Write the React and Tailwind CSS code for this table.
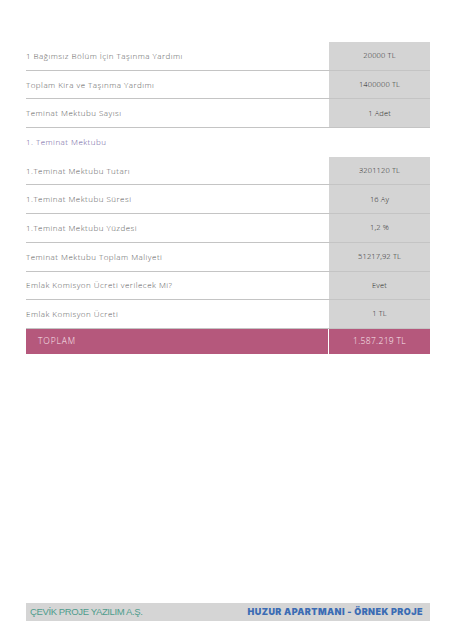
const rowsTop = [
  ['1 Bağımsız Bölüm İçin Taşınma Yardımı', '20000 TL'],
  ['Toplam Kira ve Taşınma Yardımı', '1400000 TL'],
  ['Teminat Mektubu Sayısı', '1 Adet'],
];

const rowsBottom = [
  ['1.Teminat Mektubu Tutarı', '3201120 TL'],
  ['1.Teminat Mektubu Süresi', '16 Ay'],
  ['1.Teminat Mektubu Yüzdesi', '1,2 %'],
  ['Teminat Mektubu Toplam Maliyeti', '51217,92 TL'],
  ['Emlak Komisyon Ücreti verilecek Mi?', 'Evet'],
  ['Emlak Komisyon Ücreti', '1 TL'],
];

const Row = ({ label, value }) => (
  <div className="flex h-[28.7px] border-b border-[#c4c4c4]">
    <div className="flex-1 flex items-center text-[8px] tracking-[0.06em] text-[#5a5a5a] font-light">{label}</div>
    <div className="w-[101px] bg-[#d4d4d4] flex items-center justify-center text-[7.5px] tracking-[0.02em] font-light text-[#1e1e1e]">{value}</div>
  </div>
);

export default function App() {
  return (
    <div className="w-[450px] h-[636px] bg-white relative" style={{ fontFamily: '"Open Sans", "DejaVu Sans", sans-serif' }}>
      <div className="pt-[42px] pl-[26px] w-[430px]">
        {rowsTop.map(([l, v]) => <Row key={l} label={l} value={v} />)}
        <div className="h-[28.7px] flex items-center text-[8px] tracking-[0.06em] font-light text-[#6b5a9c]">1. Teminat Mektubu</div>
        {rowsBottom.map(([l, v]) => <Row key={l} label={l} value={v} />)}
        <div className="flex h-[25px]">
          <div className="flex-1 bg-[#b5587c] flex items-center pl-[12px] text-[8.5px] tracking-[0.1em] font-light text-[#fbe9f0]">TOPLAM</div>
          <div className="w-[101px] ml-[1px] bg-[#b5587c] flex items-center justify-center text-[8.5px] tracking-[0.04em] font-light text-[#fbe9f0]">1.587.219 TL</div>
        </div>
      </div>
      <div className="absolute left-[26px] top-[603px] w-[404px] h-[18px] bg-[#d5d5d5] flex items-center justify-between pl-[4px] pr-[7px]">
        <span className="text-[9.5px] tracking-[-0.04em] text-[#4e9c8c]" style={{ fontFamily: '"Liberation Sans", Arial, sans-serif' }}>ÇEVİK PROJE YAZILIM A.Ş.</span>
        <span className="text-[9px] font-black tracking-[0.05em] text-[#3b6cb4]" style={{ fontFamily: 'Inter, sans-serif' }}>HUZUR APARTMANI - ÖRNEK PROJE</span>
      </div>
    </div>
  );
}
